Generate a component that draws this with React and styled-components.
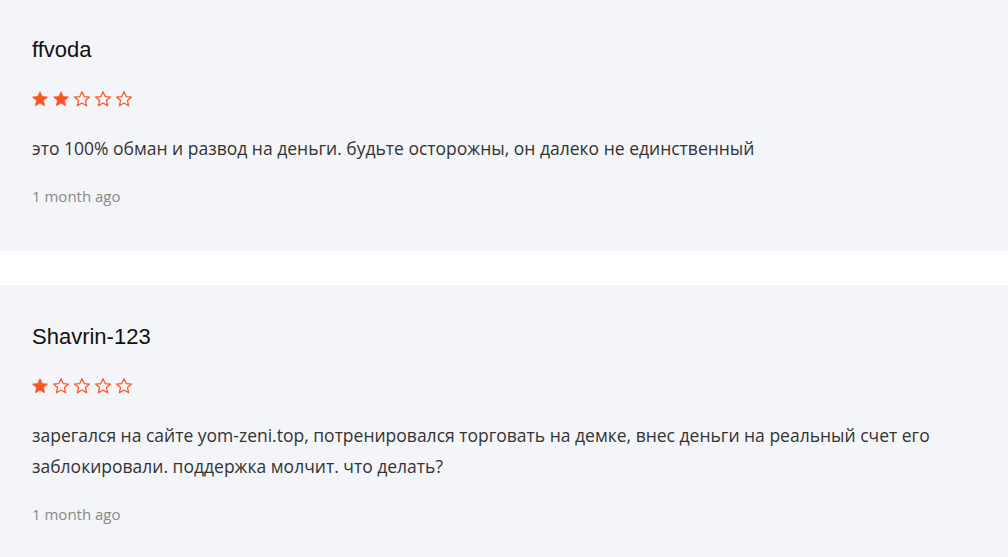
import React from "react";
import styled, { createGlobalStyle } from "styled-components";

const GlobalStyle = createGlobalStyle`
  html, body {
    margin: 0;
    padding: 0;
    background: #ffffff;
  }
`;

const reviews = [
  {
    author: "ffvoda",
    rating: 2,
    text: "это 100% обман и развод на деньги. будьте осторожны, он далеко не единственный",
    date: "1 month ago",
  },
  {
    author: "Shavrin-123",
    rating: 1,
    text: "зарегался на сайте yom-zeni.top, потренировался торговать на демке, внес деньги на реальный счет его заблокировали. поддержка молчит. что делать?",
    date: "1 month ago",
  },
];

function Star({ filled }) {
  return (
    <svg width="18" height="18" viewBox="0 0 24 24">
      <path
        d="M12 2.2l2.9 6.6 7.1.6-5.4 4.7 1.6 7L12 17.4l-6.2 3.7 1.6-7L2 9.4l7.1-.6z"
        fill={filled ? "#fe5420" : "none"}
        stroke="#fe5420"
        strokeWidth={filled ? 1 : 1.6}
        strokeLinejoin="round"
      />
    </svg>
  );
}

export default function App() {
  return (
    <Page>
      <GlobalStyle />
      {reviews.map((r) => (
        <Card key={r.author}>
          <Author>{r.author}</Author>
          <Stars>
            {[1, 2, 3, 4, 5].map((n) => (
              <Star key={n} filled={n <= r.rating} />
            ))}
          </Stars>
          <Text>{r.text}</Text>
          <Date>{r.date}</Date>
        </Card>
      ))}
    </Page>
  );
}

const Page = styled.div`
  display: flex;
  flex-direction: column;
  gap: 34px;
  margin-top: -2px;
  width: 1008px;
`;

const Card = styled.div`
  background: #f4f5f9;
  padding: 40px 32px 44px 32px;
  display: flex;
  flex-direction: column;
`;

const Author = styled.div`
  font-family: "Liberation Sans", Arial, sans-serif;
  font-size: 22px;
  line-height: 24px;
  color: #111111;
`;

const Stars = styled.div`
  display: flex;
  gap: 3px;
  height: 20px;
  align-items: center;
  margin-top: 27px;
  margin-left: -1px;
`;

const Text = styled.div`
  font-family: "Open Sans", sans-serif;
  font-size: 17.5px;
  line-height: 31px;
  color: #333333;
  margin-top: 24px;
  max-width: 940px;
`;

const Date = styled.div`
  font-family: "Open Sans", sans-serif;
  font-size: 15px;
  line-height: 20px;
  color: #888888;
  margin-top: 22px;
  margin-bottom: 1px;
`;
